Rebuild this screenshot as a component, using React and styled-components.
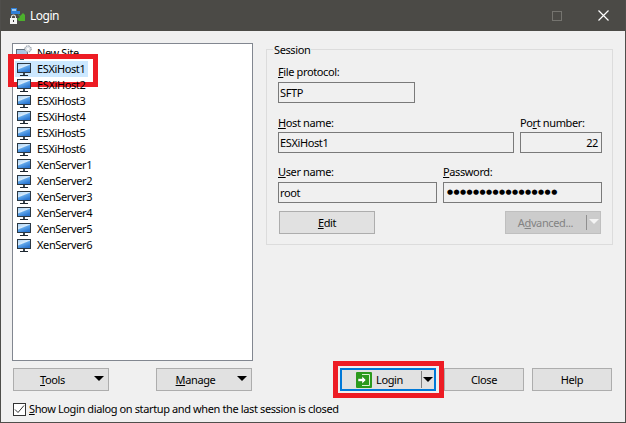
import React from "react";
import styled, { createGlobalStyle } from "styled-components";

const hosts = [
  "ESXiHost2",
  "ESXiHost3",
  "ESXiHost4",
  "ESXiHost5",
  "ESXiHost6",
  "XenServer1",
  "XenServer2",
  "XenServer3",
  "XenServer4",
  "XenServer5",
  "XenServer6",
];

const GlobalStyle = createGlobalStyle`
  html, body {
    margin: 0;
    padding: 0;
    background: #f0f0f0;
  }
  * {
    box-sizing: border-box;
  }
`;

const Window = styled.div`
  width: 626px;
  height: 423px;
  display: flex;
  flex-direction: column;
  background: #f0f0f0;
  border: 1px solid #4f4e4b;
  border-top: 0;
  overflow: hidden;
  color: #000;
  font-family: "Noto Sans", "Open Sans", sans-serif;
  font-size: 11px;
  letter-spacing: -0.38px;
  line-height: 16px;
`;

const TitleBar = styled.div`
  height: 31px;
  flex: none;
  margin: 0 -1px;
  padding-left: 9px;
  display: flex;
  align-items: center;
  background: #4b4a46;
  color: #fff;
`;

const TitleText = styled.span`
  margin-left: 5px;
  font-size: 12px;
  letter-spacing: -0.5px;
`;

const WindowControls = styled.div`
  margin-left: auto;
  display: flex;
  align-items: center;
`;

const ControlButton = styled.div`
  width: 46px;
  height: 31px;
  display: flex;
  align-items: center;
  justify-content: center;
`;

const Content = styled.div`
  flex: 1;
  padding: 12px 11px 0;
`;

const MainRow = styled.div`
  display: flex;
  align-items: flex-start;
`;

const SiteList = styled.div`
  width: 241px;
  height: 318px;
  padding: 1px 2px;
  background: #fff;
  border: 1px solid #828790;
`;

const Row = styled.div`
  position: relative;
  height: 16px;
  display: flex;
  align-items: center;
`;

const RowIcon = styled.div`
  width: 16px;
  height: 16px;
  margin: 0 2px 0 1px;
  flex: none;
`;

const RowLabel = styled.span`
  padding: 0 3px;
  white-space: nowrap;
`;

const SelectedRow = styled(Row)`
  width: 73px;
  background: #cce8ff;
`;

const Highlight = styled.div`
  position: absolute;
  border: 5px solid #ed1c24;
  pointer-events: none;
`;

const RowHighlight = styled(Highlight)`
  left: -7px;
  top: -7px;
  width: 90px;
  height: 33px;
  border-left-width: 6px;
`;

const LoginHighlight = styled(Highlight)`
  left: -9px;
  top: -9px;
  width: 111px;
  height: 37px;
`;

const GroupBox = styled.div`
  position: relative;
  width: 347px;
  height: 196px;
  margin: 6px 0 0 13px;
  padding: 14px 10px 0 11px;
  border: 1px solid #dcdcdc;
`;

const Legend = styled.span`
  position: absolute;
  left: 6px;
  top: -8px;
  padding: 0 1px;
  background: #f0f0f0;
`;

const FieldRow = styled.div`
  display: flex;
  gap: 6px;
  margin-top: ${(p) => p.$top || 0}px;
`;

const Field = styled.div`
  width: ${(p) => p.$width}px;
`;

const FieldLabel = styled.div`
  height: 16px;
  margin-bottom: ${(p) => p.$gap ?? 2}px;
  white-space: nowrap;
`;

const TextBox = styled.div`
  height: 21px;
  padding: 0 1px;
  border: 1px solid #7a7a7a;
  background: #f0f0f0;
  line-height: 19px;
  white-space: nowrap;
  text-align: ${(p) => (p.$right ? "right" : "left")};
  padding-right: ${(p) => (p.$right ? 3 : 1)}px;
`;

const Dots = styled.span`
  display: block;
  padding-left: 2px;
  font-family: "DejaVu Sans", sans-serif;
  font-size: 7px;
  letter-spacing: 0.4px;
  line-height: 19px;
`;

const Button = styled.div`
  position: relative;
  flex: none;
  width: ${(p) => p.$width || 96}px;
  margin-left: ${(p) => p.$left || 0}px;
  height: 23px;
  display: flex;
  align-items: center;
  justify-content: center;
  background: #e1e1e1;
  border: 1px solid #adadad;
  white-space: nowrap;
`;

const GroupButtons = styled.div`
  display: flex;
  justify-content: space-between;
  margin: 8px 0 0 1px;
  padding-right: 1px;
`;

const DisabledButton = styled(Button)`
  background: #cccccc;
  border-color: #bfbfbf;
  color: #838383;
  padding-right: 15px;
`;

const Caret = styled.span`
  position: absolute;
  right: ${(p) => p.$right ?? 4}px;
  top: 7px;
  width: 0;
  height: 0;
  border-left: 5px solid transparent;
  border-right: 5px solid transparent;
  border-top: 5px solid ${(p) => p.$color || "#000"};
`;

const Divider = styled.span`
  position: absolute;
  right: ${(p) => p.$right}px;
  top: ${(p) => p.$top}px;
  bottom: ${(p) => p.$top}px;
  width: 1px;
  background: ${(p) => p.$color};
`;

const MenuLabel = styled.span`
  margin-right: 17px;
`;

const ButtonBar = styled.div`
  display: flex;
  margin: 7px 0 0 1px;
`;

const LoginButton = styled(Button)`
  margin: 0 8px 0 88px;
  border: 2px solid #0078d7;
  padding-right: 17px;
`;

const LoginIcon = styled.svg`
  margin-right: 4px;
`;

const CheckRow = styled.div`
  display: flex;
  align-items: center;
  margin: 10px 0 0 1px;
`;

const CheckBox = styled.div`
  width: 13px;
  height: 13px;
  margin-right: 3px;
  background: #fff;
  border: 1px solid #333;
  display: flex;
  align-items: center;
  justify-content: center;
`;

function Monitor() {
  return (
    <svg width="16" height="16" viewBox="0 0 16 16">
      <defs>
        <linearGradient id="screen" x1="0" y1="0" x2="0.6" y2="1">
          <stop offset="0" stopColor="#a9d2f6" />
          <stop offset="0.45" stopColor="#d6eafb" />
          <stop offset="0.55" stopColor="#5fa6ea" />
          <stop offset="1" stopColor="#2c78d2" />
        </linearGradient>
      </defs>
      <rect x="1" y="2" width="14" height="10" fill="#2b3742" />
      <rect x="2" y="3" width="12" height="8" fill="url(#screen)" />
      <rect x="7" y="12" width="2" height="2" fill="#3a4650" />
      <rect x="4" y="14" width="8" height="1" fill="#1d2730" />
    </svg>
  );
}

function NewSiteIcon() {
  return (
    <svg width="16" height="16" viewBox="0 0 16 16">
      <rect x="0" y="4" width="12" height="9" fill="#5d6b78" />
      <rect x="1" y="5" width="10" height="7" fill="#a9c6e4" />
      <rect x="4" y="13" width="4" height="2" fill="#4a5560" />
      <circle cx="12" cy="4" r="3.2" fill="#dfe3e8" stroke="#7f8a96" strokeDasharray="1.5 1" />
      <circle cx="12" cy="4" r="1.1" fill="#fff" />
    </svg>
  );
}

function AppIcon() {
  return (
    <svg width="16" height="18" viewBox="0 0 16 18">
      <path d="M2 1h6v3h3v3H2z" fill="#2f7fd6" />
      <rect x="3" y="2" width="4" height="2" fill="#9cc9f2" />
      <path d="M2 10a2.5 2.5 0 0 1 5 0v1H6v-1a1.5 1.5 0 0 0-3 0v1H2z" fill="#e6e6e6" />
      <rect x="1" y="11" width="7" height="6" fill="#f2f2f2" />
      <rect x="4" y="13" width="1" height="2" fill="#333" />
      <path d="M9 7l2 2 3-3 2 2v6h-6l-2-2 3-2-2-2z" fill="#4caf2c" />
    </svg>
  );
}

export default function App() {
  return (
    <>
      <GlobalStyle />
      <Window>
        <TitleBar>
          <AppIcon />
          <TitleText>Login</TitleText>
          <WindowControls>
            <ControlButton>
              <svg width="10" height="10" viewBox="0 0 10 10">
                <rect x="0.5" y="0.5" width="9" height="9" fill="none" stroke="#75746f" />
              </svg>
            </ControlButton>
            <ControlButton>
              <svg width="11" height="11" viewBox="0 0 11 11">
                <path d="M0.5 0.5l10 10M10.5 0.5l-10 10" stroke="#fff" strokeWidth="1.2" fill="none" />
              </svg>
            </ControlButton>
          </WindowControls>
        </TitleBar>
        <Content>
          <MainRow>
            <SiteList>
              <Row>
                <RowIcon>
                  <NewSiteIcon />
                </RowIcon>
                <RowLabel>New Site</RowLabel>
              </Row>
              <SelectedRow>
                <RowIcon>
                  <Monitor />
                </RowIcon>
                <RowLabel>ESXiHost1</RowLabel>
                <RowHighlight />
              </SelectedRow>
              {hosts.map((name) => (
                <Row key={name}>
                  <RowIcon>
                    <Monitor />
                  </RowIcon>
                  <RowLabel>{name}</RowLabel>
                </Row>
              ))}
            </SiteList>
            <GroupBox>
              <Legend>Session</Legend>
              <Field $width={137}>
                <FieldLabel>
                  <u>F</u>ile protocol:
                </FieldLabel>
                <TextBox>SFTP</TextBox>
              </Field>
              <FieldRow $top={12}>
                <Field $width={236}>
                  <FieldLabel $gap={1}>
                    <u>H</u>ost name:
                  </FieldLabel>
                  <TextBox>ESXiHost1</TextBox>
                </Field>
                <Field $width={82}>
                  <FieldLabel $gap={1}>
                    Po<u>r</u>t number:
                  </FieldLabel>
                  <TextBox $right>22</TextBox>
                </Field>
              </FieldRow>
              <FieldRow $top={11}>
                <Field $width={159}>
                  <FieldLabel>
                    <u>U</u>ser name:
                  </FieldLabel>
                  <TextBox>root</TextBox>
                </Field>
                <Field $width={159}>
                  <FieldLabel>
                    <u>P</u>assword:
                  </FieldLabel>
                  <TextBox>
                    <Dots>●●●●●●●●●●●●●●●●●</Dots>
                  </TextBox>
                </Field>
              </FieldRow>
              <GroupButtons>
                <Button>
                  <span>
                    <u>E</u>dit
                  </span>
                </Button>
                <DisabledButton>
                  <span>
                    A<u>d</u>vanced...
                  </span>
                  <Divider $right={13} $top={3} $color="#8f8f8f" />
                  <Caret $right={1} $color="#f4f4f4" />
                </DisabledButton>
              </GroupButtons>
            </GroupBox>
          </MainRow>
          <ButtonBar>
            <Button>
              <MenuLabel>
                <u>T</u>ools
              </MenuLabel>
              <Caret />
            </Button>
            <Button $left={47}>
              <MenuLabel>
                <u>M</u>anage
              </MenuLabel>
              <Caret />
            </Button>
            <LoginButton>
              <LoginIcon width="16" height="16" viewBox="0 0 16 16">
                <rect x="0" y="0" width="16" height="16" rx="1" fill="#2b9a1c" />
                <path d="M6 2.5h7.5v11H6" fill="none" stroke="#d9f3d0" />
                <path d="M2 6.5h4V4l4 4-4 4V9.5H2z" fill="#fff" stroke="#1d7a12" strokeWidth="0.5" />
              </LoginIcon>
              <span>Login</span>
              <Divider $right={12} $top={1} $color="#7f7f7f" />
              <Caret $right={1} />
              <LoginHighlight />
            </LoginButton>
            <Button $width={80}>Close</Button>
            <Button $width={80} $left={8}>
              Help
            </Button>
          </ButtonBar>
          <CheckRow>
            <CheckBox>
              <svg width="11" height="11" viewBox="0 0 11 11">
                <path d="M1 5.5l3 3 6-7" fill="none" stroke="#333" strokeWidth="1" />
              </svg>
            </CheckBox>
            <span>
              <u>S</u>how Login dialog on startup and when the last session is closed
            </span>
          </CheckRow>
        </Content>
      </Window>
    </>
  );
}
